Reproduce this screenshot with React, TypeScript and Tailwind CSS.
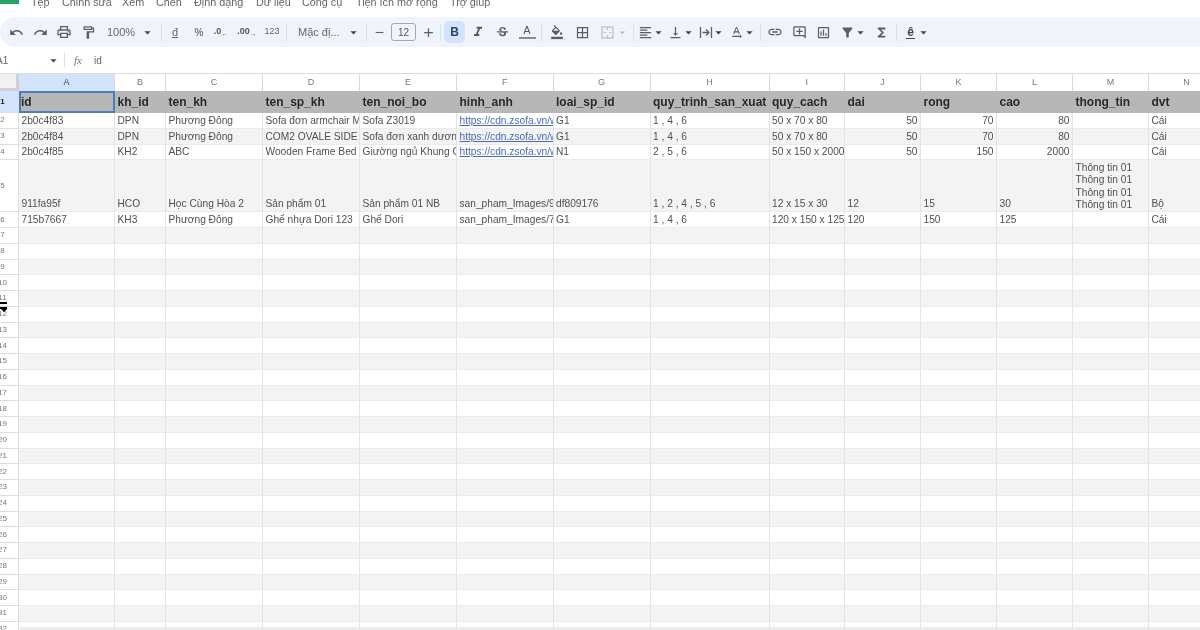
import type { ReactNode } from 'react';
import {
  MdUndo, MdRedo, MdOutlinePrint, MdOutlineFormatPaint, MdFormatItalic, MdStrikethroughS,
  MdBorderAll, MdFormatAlignLeft, MdVerticalAlignBottom, MdInsertLink, MdOutlineAddComment,
  MdOutlineInsertChart, MdFilterAlt, MdFunctions, MdArrowDropDown, MdOutlineFormatColorFill,
  MdAdd, MdRemove, MdTextRotationNone,
} from 'react-icons/md';

const FONT = 'font-["Liberation_Sans",Arial,sans-serif]';
const COLS = 'grid grid-cols-[19px_96px_51px_97px_97px_97px_96.5px_97px_119px_75.5px_76px_76px_76px_76px_76px]';

const MENU = [
  { label: 'Tệp', w: 'w-[31px]' },
  { label: 'Chỉnh sửa', w: 'w-[60px]' },
  { label: 'Xem', w: 'w-[34px]' },
  { label: 'Chèn', w: 'w-[38px]' },
  { label: 'Định dạng', w: 'w-[62px]' },
  { label: 'Dữ liệu', w: 'w-[46px]' },
  { label: 'Công cụ', w: 'w-[54px]' },
  { label: 'Tiện ích mở rộng', w: 'w-[94px]' },
  { label: 'Trợ giúp', w: 'w-[50px]' },
];

const HEADERS = ['id', 'kh_id', 'ten_kh', 'ten_sp_kh', 'ten_noi_bo', 'hinh_anh', 'loai_sp_id', 'quy_trinh_san_xuat', 'quy_cach', 'dai', 'rong', 'cao', 'thong_tin', 'dvt'];
const LETTERS = ['A', 'B', 'C', 'D', 'E', 'F', 'G', 'H', 'I', 'J', 'K', 'L', 'M', 'N'];

const LINK = 'https://cdn.zsofa.vn/w';

const ROWS = [
  ['2b0c4f83', 'DPN', 'Phương Đông', 'Sofa đơn armchair M', 'Sofa Z3019', LINK, 'G1', '1 , 4 , 6', '50 x 70 x 80', '#50', '#70', '#80', '', 'Cái'],
  ['2b0c4f84', 'DPN', 'Phương Đông', 'COM2 OVALE SIDE', 'Sofa đơn xanh dương', LINK, 'G1', '1 , 4 , 6', '50 x 70 x 80', '#50', '#70', '#80', '', 'Cái'],
  ['2b0c4f85', 'KH2', 'ABC', 'Wooden Frame Bed', 'Giường ngủ Khung G', LINK, 'N1', '2 , 5 , 6', '50 x 150 x 2000', '#50', '#150', '#2000', '', 'Cái'],
  ['911fa95f', 'HCO', 'Học Cùng Hòa 2', 'Sản phẩm 01', 'Sản phẩm 01 NB', 'san_pham_Images/9', 'df809176', '1 , 2 , 4 , 5 , 6', '12 x 15 x 30', '12', '15', '30', 'Thông tin 01\nThông tin 01\nThông tin 01\nThông tin 01', 'Bộ'],
  ['715b7667', 'KH3', 'Phương Đông', 'Ghế nhựa Dori 123', 'Ghế Dori', 'san_pham_Images/7', 'G1', '1 , 4 , 6', '120 x 150 x 125', '120', '150', '125', '', 'Cái'],
];

const EMPTY_ROWS = Array.from({ length: 26 }, (_, i) => i + 7);

const Btn = ({ w = 'w-6', ml = '', children }: { w?: string; ml?: string; children: ReactNode }) => (
  <div className={`${w} ${ml} h-6 shrink-0 flex items-center justify-center text-[#5b5e61]`}>{children}</div>
);

const Sep = ({ ml }: { ml: string }) => <div className={`${ml} w-px h-[17px] shrink-0 bg-[#dde0e4]`} />;

const Caret = ({ w = 'w-[14px]' }: { w?: string }) => (
  <div className={`${w} shrink-0 flex items-center justify-center text-[#444746]`}>
    <MdArrowDropDown size={15} className="shrink-0" />
  </div>
);

// icon followed by its small dropdown arrow
const Pair = ({ w = 'w-[30px]', ml = '', children }: { w?: string; ml?: string; children: ReactNode }) => (
  <div className={`${w} ${ml} h-6 shrink-0 flex items-center justify-center text-[#5b5e61]`}>
    <div className="w-[15px] shrink-0 flex justify-center">{children}</div>
    <Caret w="w-[11px]" />
  </div>
);

const Gutter = ({ n, active }: { n: number; active?: boolean }) => (
  <div className={`flex items-center justify-center pr-[13px] text-[8px] border-r border-b border-[#dcdddd] ${active ? 'bg-[#d3e3fd] text-[#222]' : 'bg-white text-[#777]'}`}>
    {n}
  </div>
);

const Toolbar = () => (
  <div className="w-[1240px] h-[30px] flex items-center pl-1 rounded-[15px] bg-[#f0f4fa]">
    <Btn><MdUndo size={15} /></Btn>
    <Btn><MdRedo size={15} /></Btn>
    <Btn><MdOutlinePrint size={16} /></Btn>
    <Btn><MdOutlineFormatPaint size={15} /></Btn>
    <div className="w-[56px] shrink-0 flex items-center pl-[7px] text-[11px] text-[#666]">
      <span className="w-[33px]">100%</span>
      <Caret />
    </div>
    <Sep ml="ml-[5px]" />
    <Btn ml="ml-[1px]"><span className="text-[11px] underline text-[#666]">đ</span></Btn>
    <Btn><span className="text-[10px] font-bold text-[#777]">%</span></Btn>
    <Btn w="w-5"><span className="text-[9px] font-bold text-[#555]">.0<sub className="text-[7px]">←</sub></span></Btn>
    <Btn w="w-8"><span className="text-[9px] font-bold text-[#555]">.00<sub className="text-[7px]">→</sub></span></Btn>
    <Btn w="w-[18px]"><span className="text-[9px] text-[#666]">123</span></Btn>
    <Sep ml="ml-[5px]" />
    <div className="w-[72px] ml-[1px] shrink-0 flex items-center pl-[10px] text-[11px] text-[#666]">
      <span className="w-[48px] whitespace-nowrap">Mặc đị...</span>
      <Caret />
    </div>
    <Sep ml="ml-[6px]" />
    <Btn><MdRemove size={13} /></Btn>
    <div className="w-[25px] h-[18px] shrink-0 rounded-[3px] border border-[#a5a8ab] flex items-center justify-center text-[10px] text-[#555]">12</div>
    <Btn><MdAdd size={15} /></Btn>
    <Sep ml="ml-0" />
    <div className="ml-[3px] w-[21px] h-[22px] shrink-0 rounded-[5px] bg-[#d3e3fd] flex items-center justify-center text-[12px] font-bold text-[#24477e]">B</div>
    <Btn w="w-[25px]"><MdFormatItalic size={16} /></Btn>
    <Btn><MdStrikethroughS size={15} /></Btn>
    <Btn w="w-[26px]">
      <div className="flex flex-col items-center leading-none">
        <span className="text-[11px] text-[#555]">A</span>
        <div className="w-[17px] h-[2px] mt-[1px] bg-[#8a8d90]" />
      </div>
    </Btn>
    <Sep ml="ml-[1px]" />
    <Btn w="w-[30px]">
      <div className="flex flex-col items-center">
        <MdOutlineFormatColorFill size={14} />
        <div className="w-[17px] h-[1px] bg-[#e0e2e5]" />
      </div>
    </Btn>
    <Btn w="w-5"><MdBorderAll size={15} /></Btn>
    <Btn w="w-[30px]">
      <svg width="13" height="13" viewBox="0 0 13 13" fill="none" stroke="#b9bcc0" strokeWidth="1.2">
        <rect x="1" y="1" width="11" height="11" />
        <path d="M6.5 1v3M6.5 9v3M3 6.5h2M8 6.5h2" />
      </svg>
    </Btn>
    <div className="-ml-[3px] w-[7px] flex justify-center text-[#b9bcc0]"><MdArrowDropDown size={13} className="shrink-0" /></div>
    <Sep ml="ml-[7px]" />
    <Pair ml="ml-[2px]"><MdFormatAlignLeft size={15} /></Pair>
    <Pair><MdVerticalAlignBottom size={15} /></Pair>
    <Pair>
      <svg width="14" height="13" viewBox="0 0 14 13" fill="none" stroke="#5b5e61" strokeWidth="1.3">
        <path d="M1.5 1v11M12.5 1v11M3.5 6.5h6M7 3.5l3 3-3 3" />
      </svg>
    </Pair>
    <Pair w="w-[31px]"><MdTextRotationNone size={15} /></Pair>
    <Sep ml="ml-[3px]" />
    <Btn ml="ml-[2px]"><MdInsertLink size={16} /></Btn>
    <Btn><MdOutlineAddComment size={15} /></Btn>
    <Btn><MdOutlineInsertChart size={15} /></Btn>
    <Pair ml="ml-[3px]"><MdFilterAlt size={15} /></Pair>
    <Btn ml="ml-[1px]"><MdFunctions size={15} /></Btn>
    <Sep ml="ml-[3px]" />
    <Pair ml="ml-[4px]">
      <div className="flex flex-col items-center leading-none">
        <span className="text-[12px] font-bold text-[#444]">ê</span>
        <div className="w-[9px] h-[1px] bg-[#444]" />
      </div>
    </Pair>
  </div>
);

const Cell = ({ value, col }: { value: string; col: number }) => {
  const isNum = value.startsWith('#');
  const isLink = value.startsWith('https');
  return (
    <div className={`px-[2.5px] flex items-end overflow-hidden whitespace-nowrap border-r border-r-[#e2e3e4] border-b border-b-[#ebebec] ${isNum ? 'justify-end' : ''}`}>
      {col === 12 && value ? (
        <span className="whitespace-pre-line leading-[12.3px]">{value}</span>
      ) : isLink ? (
        <span className="underline text-[#4a6cc0]">{value}</span>
      ) : (
        <span>{isNum ? value.slice(1) : value}</span>
      )}
    </div>
  );
};

export default function App() {
  return (
    <div className={`relative w-[1200px] h-[630px] overflow-hidden bg-white blur-[0.5px] ${FONT}`}>
      {/* menu, cut off by the top of the window */}
      <div className="h-[17px] flex items-start overflow-hidden">
        <div className="w-[19px] h-1 shrink-0 bg-[#23a566]" />
        <div className="ml-[12px] -mt-[5px] flex text-[10.8px] leading-[14px] text-[#666] whitespace-nowrap">
          {MENU.map((m) => (
            <span key={m.label} className={m.w}>{m.label}</span>
          ))}
        </div>
      </div>

      <Toolbar />

      {/* formula bar */}
      <div className="h-[26px] flex items-center text-[10px] text-[#666]">
        <span className="-ml-[4px] w-[50px]">A1</span>
        <Caret />
        <div className="ml-[4px] w-px h-[14px] bg-[#dde0e4]" />
        <span className="ml-[9px] w-[20px] italic text-[11px] font-['Liberation_Serif',serif] text-[#777]">fx</span>
        <span>id</span>
      </div>

      {/* sheet */}
      <div className="w-[1225px] border-t border-[#dcdddd]">
        <div className={`${COLS} h-[17px] text-[9px] text-[#777]`}>
          <div className="bg-[#f1f1f1] border-r-[3px] border-b-[3px] border-[#cfd0d2]" />
          {LETTERS.map((l, i) => (
            <div key={l} className={`flex items-center justify-center border-r border-[#d8d9da] ${i === 0 ? 'bg-[#d3e3fd] text-[#2b4a73]' : 'bg-white'}`}>{l}</div>
          ))}
        </div>

        <div className={`${COLS} h-[22px] text-[12px] font-bold text-[#2a2a2a]`}>
          <Gutter n={1} active />
          {HEADERS.map((h, i) => (
            <div key={h} className={`px-[2.5px] pb-[1px] flex items-center overflow-hidden whitespace-nowrap bg-[#b7b7b7] ${i === 0 ? 'border-2 border-[#4a7dc0] pl-0' : ''}`}>{h}</div>
          ))}
        </div>

        <div className="text-[10.2px] leading-[14px] text-[#505050]">
          {ROWS.map((r, idx) => (
            <div key={idx} className={`${COLS} ${idx === 3 ? 'h-[52px]' : 'h-[15.75px]'} ${idx % 2 === 1 ? 'bg-[#f3f3f3]' : 'bg-white'}`}>
              <Gutter n={idx + 2} />
              {r.map((v, c) => (
                <Cell key={c} value={v} col={c} />
              ))}
            </div>
          ))}
          {EMPTY_ROWS.map((n) => (
            <div key={n} className={`${COLS} h-[15.75px] ${n % 2 === 1 ? 'bg-[#f3f3f3]' : 'bg-white'}`}>
              <Gutter n={n} />
              {LETTERS.map((l) => (
                <div key={l} className="border-r border-r-[#e2e3e4] border-b border-b-[#ebebec]" />
              ))}
            </div>
          ))}
        </div>
      </div>

      {/* row resize handle */}
      <div className="absolute left-0 top-[302px] w-[7px]">
        <div className="h-[2px] bg-black" />
        <div className="mt-[3px] h-[2px] bg-black" />
        <div className="mx-auto w-0 h-0 border-x-[3px] border-x-transparent border-t-[3px] border-t-black" />
      </div>

      {/* strip along the bottom edge */}
      <div className="absolute left-[20px] right-0 bottom-0 h-[3px] bg-[#eceeee]" />
    </div>
  );
}
